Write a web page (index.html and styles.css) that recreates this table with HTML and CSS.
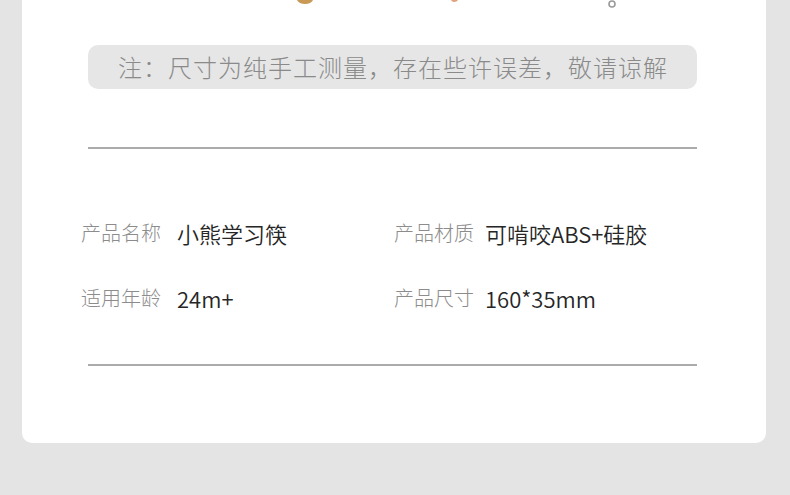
FILE: index.html
```html
<!DOCTYPE html>
<html lang="zh">
<head>
<meta charset="utf-8">
<link rel="stylesheet" href="styles.css">
</head>
<body>
<div class="page">
  <div class="card">
    <svg class="art" width="744" height="10" viewBox="0 0 744 10">
      <path d="M275 0 L291 0 Q289 4 283 4 Q277 4 275 0 Z" fill="#c99a55"/>
      <path d="M429 0 L436 0 Q435 2 432 2 Q430 2 429 0 Z" fill="#dfa27a"/>
      <circle cx="590" cy="4" r="3" fill="none" stroke="#9a9a9a" stroke-width="1.6"/>
    </svg>
    <div class="note">注：尺寸为纯手工测量，存在些许误差，敬请谅解</div>
    <div class="rule rule-top"></div>
    <div class="specs">
      <div class="spec">
        <span class="label">产品名称</span>
        <span class="value">小熊学习筷</span>
      </div>
      <div class="spec spec-right">
        <span class="label">产品材质</span>
        <span class="value">可啃咬ABS+硅胶</span>
      </div>
      <div class="spec">
        <span class="label">适用年龄</span>
        <span class="value">24m+</span>
      </div>
      <div class="spec spec-right">
        <span class="label">产品尺寸</span>
        <span class="value">160*35mm</span>
      </div>
    </div>
    <div class="rule rule-bottom"></div>
  </div>
</div>
</body>
</html>
```
FILE: styles.css
```css
html, body {
  margin: 0;
  padding: 0;
  background: #e4e4e4;
}
body {
  font-family: "Noto Sans CJK SC", "Noto Sans", sans-serif;
}
.page {
  padding: 0 24px 0 22px;
  height: 495px;
  box-sizing: border-box;
}
.card {
  background: #ffffff;
  width: 744px;
  height: 443px;
  border-radius: 0 0 10px 10px;
  box-sizing: border-box;
  padding-left: 66px;
  overflow: hidden;
}
.art {
  display: block;
  margin-left: -66px;
}
.note {
  margin-top: 35px;
  width: 609px;
  height: 44px;
  background: #e6e6e6;
  border-radius: 10px;
  color: #8a8a8a;
  font-size: 24px;
  font-weight: 300;
  line-height: 44px;
  text-align: center;
  letter-spacing: 1px;
  text-indent: 1px;
}
.rule {
  width: 609px;
  height: 2px;
  background: #ababab;
}
.rule-top {
  margin-top: 58px;
}
.specs {
  margin-left: -7px;
  margin-top: 51px;
  display: grid;
  grid-template-columns: 311px 1fr;
}
.spec {
  display: flex;
  align-items: center;
  height: 65px;
}
.spec-right {
  padding-left: 2px;
}
.label {
  width: 96px;
  font-size: 20px;
  color: #8c8c8c;
  font-weight: 300;
}
.spec-right .label {
  width: 91px;
}
.value {
  font-size: 22px;
  color: #262626;
  font-weight: 350;
}
.rule-bottom {
  margin-top: 34px;
}
```
